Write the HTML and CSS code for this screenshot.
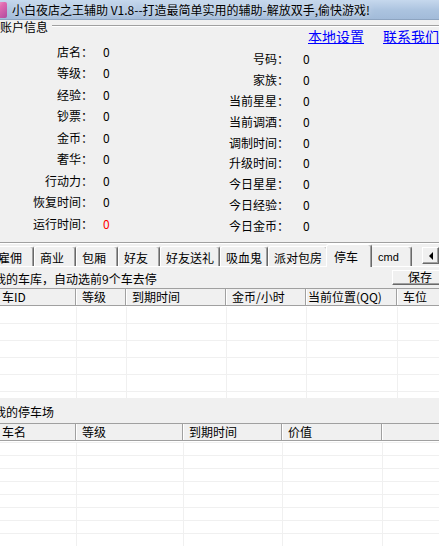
FILE: index.html
```html
<!DOCTYPE html>
<html lang="zh-CN">
<head>
<meta charset="utf-8">
<title>小白夜店之王辅助 V1.8</title>
<link rel="stylesheet" href="styles.css">
</head>
<body>
<div class="window">
  <header class="titlebar">
    <span class="app-icon"></span>
    <span class="title-text">小白夜店之王辅助 V1.8--打造最简单实用的辅助-解放双手,偷快游戏!</span>
  </header>

  <section class="group">
    <div class="group-head"><span class="group-label">账户信息</span><span class="group-line"></span></div>
    <div class="info">
      <div class="info-left">
        <span class="lbl">店名：</span><span class="val">0</span>
        <span class="lbl">等级：</span><span class="val">0</span>
        <span class="lbl">经验：</span><span class="val">0</span>
        <span class="lbl">钞票：</span><span class="val">0</span>
        <span class="lbl">金币：</span><span class="val">0</span>
        <span class="lbl">奢华：</span><span class="val">0</span>
        <span class="lbl">行动力：</span><span class="val">0</span>
        <span class="lbl">恢复时间：</span><span class="val">0</span>
        <span class="lbl">运行时间：</span><span class="val val-red">0</span>
      </div>
      <div class="info-right">
        <div class="links"><a href="#">本地设置</a><a href="#">联系我们</a></div>
        <div class="info-grid">
          <span class="lbl">号码：</span><span class="val val-r">0</span>
          <span class="lbl">家族：</span><span class="val val-r">0</span>
          <span class="lbl">当前星星：</span><span class="val val-r">0</span>
          <span class="lbl">当前调酒：</span><span class="val val-r">0</span>
          <span class="lbl">调制时间：</span><span class="val val-r">0</span>
          <span class="lbl">升级时间：</span><span class="val val-r">0</span>
          <span class="lbl">今日星星：</span><span class="val val-r">0</span>
          <span class="lbl">今日经验：</span><span class="val val-r">0</span>
          <span class="lbl">今日金币：</span><span class="val val-r">0</span>
        </div>
      </div>
    </div>
    <div class="group-bottom"></div>
  </section>

  <nav class="tabs">
    <span class="tab tab-s">雇佣</span>
    <span class="tab tab-s">商业</span>
    <span class="tab tab-s">包厢</span>
    <span class="tab tab-s">好友</span>
    <span class="tab tab-l">好友送礼</span>
    <span class="tab tab-m">吸血鬼</span>
    <span class="tab tab-l">派对包房</span>
    <span class="tab tab-s tab-active">停车</span>
    <span class="tab tab-s tab-latin">cmd</span>
    <span class="tab-scroll">
      <span class="scroll-btn"><span class="arrow-left"></span></span>
      <span class="scroll-btn"><span class="arrow-right"></span></span>
    </span>
  </nav>

  <section class="panel">
    <div class="panel-row">
      <span class="caption">我的车库，自动选前9个车去停</span>
      <button class="btn" type="button">保存</button>
    </div>

    <div class="listview lv-garage">
      <div class="lv-head">
        <span class="th g1 first">车ID</span>
        <span class="th g2">等级</span>
        <span class="th g3">到期时间</span>
        <span class="th g4">金币/小时</span>
        <span class="th g5 tight">当前位置(QQ)</span>
        <span class="th grest">车位</span>
      </div>
      <div class="lv-body">
        <div class="tr"><span class="td g1b"></span><span class="td g2"></span><span class="td g3"></span><span class="td g4"></span><span class="td g5"></span><span class="td grest"></span></div>
        <div class="tr"><span class="td g1b"></span><span class="td g2"></span><span class="td g3"></span><span class="td g4"></span><span class="td g5"></span><span class="td grest"></span></div>
        <div class="tr"><span class="td g1b"></span><span class="td g2"></span><span class="td g3"></span><span class="td g4"></span><span class="td g5"></span><span class="td grest"></span></div>
        <div class="tr"><span class="td g1b"></span><span class="td g2"></span><span class="td g3"></span><span class="td g4"></span><span class="td g5"></span><span class="td grest"></span></div>
        <div class="tr"><span class="td g1b"></span><span class="td g2"></span><span class="td g3"></span><span class="td g4"></span><span class="td g5"></span><span class="td grest"></span></div>
        <div class="tr"><span class="td g1b"></span><span class="td g2"></span><span class="td g3"></span><span class="td g4"></span><span class="td g5"></span><span class="td grest"></span></div>
      </div>
    </div>

    <div class="caption caption-2">我的停车场</div>

    <div class="listview lv-lot">
      <div class="lv-head">
        <span class="th p1 first">车名</span>
        <span class="th p2">等级</span>
        <span class="th p3">到期时间</span>
        <span class="th p4">价值</span>
        <span class="th grest"></span>
      </div>
      <div class="lv-body">
        <div class="tr"><span class="td p1b"></span><span class="td p2"></span><span class="td p3"></span><span class="td p4"></span><span class="td grest"></span></div>
        <div class="tr"><span class="td p1b"></span><span class="td p2"></span><span class="td p3"></span><span class="td p4"></span><span class="td grest"></span></div>
        <div class="tr"><span class="td p1b"></span><span class="td p2"></span><span class="td p3"></span><span class="td p4"></span><span class="td grest"></span></div>
        <div class="tr"><span class="td p1b"></span><span class="td p2"></span><span class="td p3"></span><span class="td p4"></span><span class="td grest"></span></div>
        <div class="tr"><span class="td p1b"></span><span class="td p2"></span><span class="td p3"></span><span class="td p4"></span><span class="td grest"></span></div>
        <div class="tr"><span class="td p1b"></span><span class="td p2"></span><span class="td p3"></span><span class="td p4"></span><span class="td grest"></span></div>
        <div class="tr"><span class="td p1b"></span><span class="td p2"></span><span class="td p3"></span><span class="td p4"></span><span class="td grest"></span></div>
        <div class="tr"><span class="td p1b"></span><span class="td p2"></span><span class="td p3"></span><span class="td p4"></span><span class="td grest"></span></div>
        <div class="tr"><span class="td p1b"></span><span class="td p2"></span><span class="td p3"></span><span class="td p4"></span><span class="td grest"></span></div>
      </div>
    </div>
  </section>
</div>
</body>
</html>
```

FILE: styles.css
```css
* { box-sizing: border-box; }

html, body {
  margin: 0;
  padding: 0;
}

body {
  background: #f0f0f0;
  font-family: "Noto Sans CJK SC", "Noto Sans", sans-serif;
  font-size: 12px;
  color: #000;
  overflow: hidden;
}

.window {
  width: 439px;
  height: 546px;
  overflow: hidden;
  background: #f0f0f0;
}

/* ---------- title bar ---------- */
.titlebar {
  display: flex;
  align-items: center;
  height: 20px;
  line-height: 19px;
  background: linear-gradient(180deg, #c6d8ed 0%, #abc3df 55%, #a2bbd9 100%);
  border-bottom: 1px solid #8da4c0;
  white-space: nowrap;
  overflow: hidden;
}

.app-icon {
  flex: none;
  width: 16px;
  height: 16px;
  margin-left: -9px;
  margin-right: 5px;
  border-radius: 2px;
  background: linear-gradient(135deg, #f9c4e2 0%, #e06ab0 45%, #b04a9e 100%);
}

.title-text {
  text-shadow: 0 0 6px rgba(255, 255, 255, 0.9);
}

/* ---------- group box ---------- */
.group-head {
  display: flex;
  height: 14px;
  line-height: 14px;
}

.group-label {
  padding-right: 4px;
  white-space: nowrap;
}

.group-line {
  flex: 1;
  height: 2px;
  margin-top: 5px;
  border-top: 1px solid #a0a0a0;
  border-bottom: 1px solid #fff;
}

.info {
  display: flex;
  height: 208px;
}

.info-left {
  width: 200px;
  padding-top: 6.5px;
  display: grid;
  grid-template-columns: 93px auto;
  grid-auto-rows: 21.5px;
  line-height: 21.5px;
  align-content: start;
}

.lbl {
  text-align: right;
  white-space: nowrap;
}

.val { padding-left: 10px; }
.val-r { padding-left: 14px; }
.val-red { color: #ff0000; }

.info-right {
  flex: 1;
  margin-top: -5px;
}

.links {
  display: flex;
  gap: 19px;
  height: 20px;
  padding-left: 108px;
  font-size: 14px;
  line-height: 14px;
  white-space: nowrap;
}

.links a {
  color: #0000ff;
  text-decoration: underline;
}

.info-grid {
  display: grid;
  grid-template-columns: 89px auto;
  grid-auto-rows: 20.9px;
  line-height: 20.9px;
}

.group-bottom {
  height: 2px;
  border-top: 1px solid #a0a0a0;
  border-bottom: 1px solid #fff;
}

/* ---------- tabs ---------- */
.tabs {
  display: flex;
  align-items: flex-end;
  height: 20px;
  margin: 2px -17px 0 -8px;
}

.tab {
  flex: none;
  height: 20px;
  padding: 2px 0 0 5px;
  line-height: 17px;
  white-space: nowrap;
  background: #f0f0f0;
  border-top: 1px solid #fff;
  border-left: 1px solid #fff;
  border-right: 1px solid #696969;
  box-shadow: inset -1px 0 #a0a0a0;
  border-radius: 3px 3px 0 0;
}

.tab-s { width: 42px; }
.tab-m { width: 48px; }
.tab-l { width: 60px; }

.tab-active {
  position: relative;
  z-index: 1;
  width: 46px;
  height: 23px;
  margin: 0 -2px -1px -2px;
  padding: 3px 0 0 7px;
}

.tab-latin {
  font-family: "Liberation Sans", "DejaVu Sans", sans-serif;
  font-size: 11px;
  padding-left: 7px;
}

.tab-scroll {
  display: flex;
  align-self: flex-start;
  margin-left: auto;
  margin-top: 1px;
}

.scroll-btn {
  display: flex;
  align-items: center;
  justify-content: center;
  width: 17px;
  height: 17px;
  background: #f0f0f0;
  border: 1px solid;
  border-color: #fff #696969 #696969 #fff;
  box-shadow: inset -1px -1px #a0a0a0;
}

.arrow-left {
  width: 0;
  height: 0;
  border-top: 4px solid transparent;
  border-bottom: 4px solid transparent;
  border-right: 4px solid #000;
}

.arrow-right {
  width: 0;
  height: 0;
  border-top: 4px solid transparent;
  border-bottom: 4px solid transparent;
  border-left: 4px solid #000;
}

/* ---------- panel ---------- */
.panel {
  border-top: 1px solid #fff;
  margin-right: -9px;
}

.panel-row {
  display: flex;
  justify-content: space-between;
  align-items: flex-start;
  height: 21px;
}

.caption {
  margin-left: -6px;
  padding-top: 1px;
  line-height: 21px;
  white-space: nowrap;
}

.caption-2 {
  height: 25px;
  padding-top: 3px;
  line-height: 22px;
}

.btn {
  -webkit-appearance: none;
  appearance: none;
  margin: 3px 0 0 0;
  width: 56px;
  height: 15px;
  padding: 0 0 2px 0;
  font-family: inherit;
  font-size: 12px;
  line-height: 11px;
  color: #000;
  background: #f0f0f0;
  border: 1px solid;
  border-color: #fff #696969 #696969 #fff;
  box-shadow: inset -1px -1px #a0a0a0;
  border-radius: 0;
}

/* ---------- list views ---------- */
.listview {
  margin-left: -5px;
  border-top: 1px solid #a0a0a0;
}

.lv-head {
  display: flex;
  height: 17px;
  border-bottom: 1px solid #a0a0a0;
  background: #f0f0f0;
}

.th {
  flex: none;
  height: 16px;
  padding-left: 5px;
  line-height: 16px;
  white-space: nowrap;
  overflow: hidden;
  border-left: 1px solid #fff;
  border-right: 1px solid #a0a0a0;
}

.th.first { padding-left: 6px; }
.th.tight { padding-left: 1px; }

.lv-body {
  background: #fff;
  overflow: hidden;
}

.lv-garage .lv-body {
  height: 92px;
  padding-top: 1px;
}

.lv-garage .tr {
  display: flex;
  height: 17px;
  border-bottom: 1px solid #f0f0f0;
}

.lv-lot .lv-body {
  height: 110px;
  padding-top: 1px;
}

.lv-lot .tr {
  display: flex;
  height: 13px;
  border-top: 1px solid #f0f0f0;
}

.td {
  flex: none;
  height: 100%;
  border-right: 1px solid #f0f0f0;
}

.grest { flex: 1; border-right: none; }

/* garage columns */
.g1 { width: 81px; }
.g1b { width: 82px; }
.g2 { width: 50px; }
.g3 { width: 100px; }
.g4 { width: 80px; }
.g5 { width: 91px; }

/* parking lot columns */
.p1 { width: 81px; }
.p1b { width: 82px; }
.p2 { width: 107px; }
.p3 { width: 99px; }
.p4 { width: 100px; }
```
